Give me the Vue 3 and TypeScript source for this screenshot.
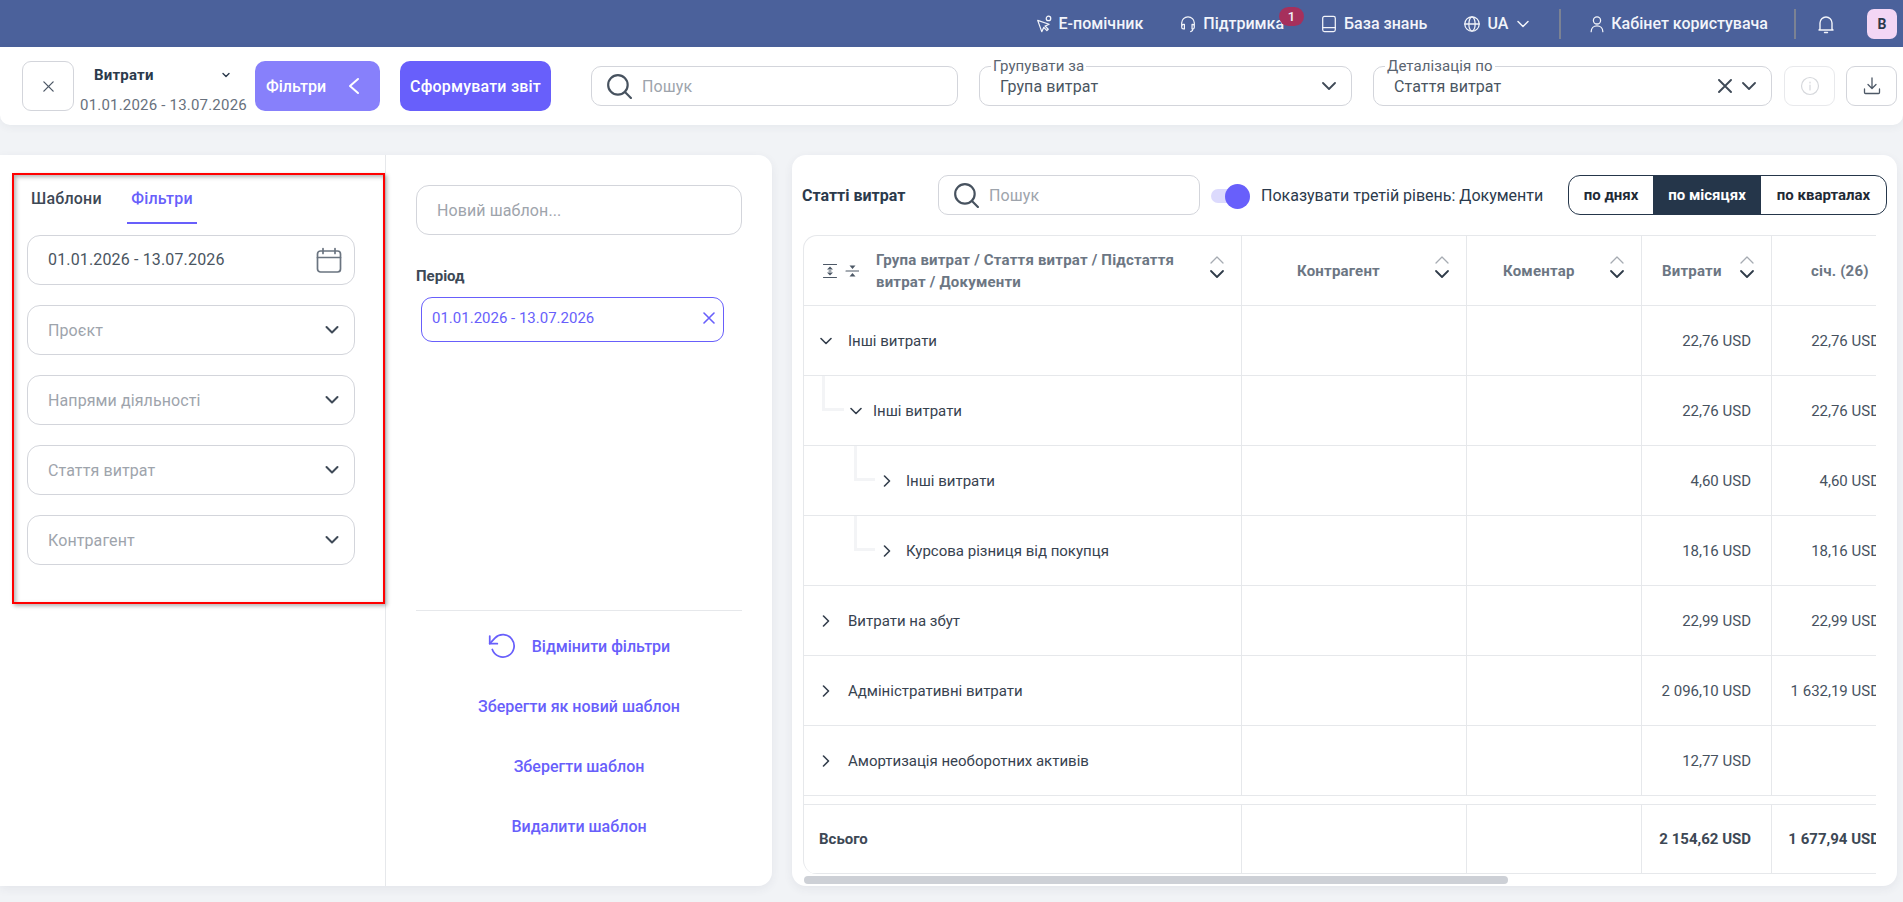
<script setup lang="ts">
interface Row {
  name: string
  level: number
  open: boolean
  total: string
  jan: string
}

const filters: string[] = ['Проєкт', 'Напрями діяльності', 'Стаття витрат', 'Контрагент']

const rows: Row[] = [
  { name: 'Інші витрати', level: 0, open: true, total: '22,76 USD', jan: '22,76 USD' },
  { name: 'Інші витрати', level: 1, open: true, total: '22,76 USD', jan: '22,76 USD' },
  { name: 'Інші витрати', level: 2, open: false, total: '4,60 USD', jan: '4,60 USD' },
  { name: 'Курсова різниця від покупця', level: 2, open: false, total: '18,16 USD', jan: '18,16 USD' },
  { name: 'Витрати на збут', level: 0, open: false, total: '22,99 USD', jan: '22,99 USD' },
  { name: 'Адміністративні витрати', level: 0, open: false, total: '2 096,10 USD', jan: '1 632,19 USD' },
  { name: 'Амортизація необоротних активів', level: 0, open: false, total: '12,77 USD', jan: '' },
]

const actions: string[] = ['Зберегти як новий шаблон', 'Зберегти шаблон', 'Видалити шаблон']
</script>

<template>
  <div class="page">
    <header class="topbar">
      <a class="top-link">
        <svg class="top-ico" viewBox="0 0 20 20"><path d="M3 6l4.500 12.500 2.300-4.800 3.400 3.600 1.500-1.500-3.500-3.500 4.500-2z" /><circle cx="15" cy="3.800" r="2.500" /></svg>
        Е-помічник
      </a>
      <a class="top-link support">
        <svg class="top-ico" viewBox="0 0 20 20"><path d="M3 12V9a7 7 0 0 1 14 0v3M3 12.500a2 2 0 0 1 2-2h1v5H5a2 2 0 0 1-2-2zM17 12.500a2 2 0 0 0-2-2h-.5v5h.5a2 2 0 0 0 2-2zM15.500 15.500c0 1.500-1 2.500-2.500 3" /></svg>
        Підтримка
        <span class="badge">1</span>
      </a>
      <a class="top-link">
        <svg class="top-ico" viewBox="0 0 20 20"><rect x="3" y="1.500" width="14" height="17" rx="2" /><path d="M3 14h14" /></svg>
        База знань
      </a>
      <a class="top-link lang">
        <svg class="top-ico" viewBox="0 0 20 20"><circle cx="10" cy="10" r="8" /><ellipse cx="10" cy="10" rx="3.500" ry="8" /><path d="M2 10h16" /></svg>
        UA
        <svg class="top-chev" viewBox="0 0 12 12"><path d="M1 3.500l5 5 5-5" /></svg>
      </a>
      <span class="top-sep" />
      <a class="top-link user">
        <svg class="top-ico" viewBox="0 0 20 20"><circle cx="10" cy="6" r="4" /><path d="M3.500 18.500c0-4 2.800-6.500 6.500-6.500s6.500 2.500 6.500 6.500" /></svg>
        Кабінет користувача
      </a>
      <span class="top-sep sep-2" />
      <svg class="bell" viewBox="0 0 20 20"><path d="M4 15V9a6 6 0 0 1 12 0v6l1 1H3zM8.500 18.500h3" /></svg>
      <span class="avatar">В</span>
    </header>

    <section class="toolbar">
      <button class="square-btn close-btn">
        <svg viewBox="0 0 14 14"><path d="M2 2l10 10M12 2L2 12" /></svg>
      </button>
      <div class="report">
        <div class="report-row">
          <b>Витрати</b>
          <svg viewBox="0 0 12 12"><path d="M3 4.500l3 3 3-3" /></svg>
        </div>
        <span class="report-date">01.01.2026 - 13.07.2026</span>
      </div>
      <button class="fill-btn filters-btn">
        Фільтри
        <svg viewBox="0 0 12 20"><path d="M10 3L2 10l8 7" /></svg>
      </button>
      <button class="fill-btn build-btn">Сформувати звіт</button>
      <div class="field search-main">
        <svg class="search-ico" viewBox="0 0 24 24"><circle cx="11" cy="11" r="9" /><path d="M17.500 17.500L23 23" /></svg>
        <span class="ph">Пошук</span>
      </div>
      <div class="field group-by">
        <span class="legend">Групувати за</span>
        <span class="value">Група витрат</span>
        <svg class="chev" viewBox="0 0 14 14"><path d="M1 4l6 6 6-6" /></svg>
      </div>
      <div class="field detail-by">
        <span class="legend">Деталізація по</span>
        <span class="value">Стаття витрат</span>
        <svg class="clear" viewBox="0 0 14 14"><path d="M1 1l12 12M13 1L1 13" /></svg>
        <svg class="chev" viewBox="0 0 14 14"><path d="M1 4l6 6 6-6" /></svg>
      </div>
      <button class="square-btn info-btn">
        <svg viewBox="0 0 20 20"><circle cx="10" cy="10" r="8.500" /><path d="M10 9v5M10 6v1" /></svg>
      </button>
      <button class="square-btn save-btn">
        <svg viewBox="0 0 20 20"><path d="M10 2v10M6 8.500l4 4 4-4M2.500 13v3.500a1 1 0 0 0 1 1h13a1 1 0 0 0 1-1V13" /></svg>
      </button>
    </section>

    <main class="content">
      <section class="card filter-card">
        <div class="filter-col">
          <div class="marked">
            <div class="tabs">
              <span class="tab">Шаблони</span>
              <span class="tab active">Фільтри</span>
            </div>
            <div class="filter-list">
              <div class="select">
                <span class="select-date">01.01.2026 - 13.07.2026</span>
                <svg class="cal" viewBox="0 0 26 26"><rect x="1.500" y="3.500" width="23" height="21" rx="3" /><path d="M1.500 10h23M7 1v5M19 1v5" /></svg>
              </div>
              <div v-for="f in filters" :key="f" class="select">
                <span class="ph">{{ f }}</span>
                <svg class="sel-chev" viewBox="0 0 14 14"><path d="M1.500 4l5.500 5.500L12.500 4" /></svg>
              </div>
            </div>
          </div>
        </div>
        <div class="template-col">
          <div class="select name-input"><span class="ph">Новий шаблон...</span></div>
          <div class="period-label">Період</div>
          <div class="chip">
            <span>01.01.2026 - 13.07.2026</span>
            <svg viewBox="0 0 12 12"><path d="M1 1l10 10M11 1L1 11" /></svg>
          </div>
          <div class="template-actions">
            <a class="action reset">
              <svg viewBox="0 0 24 24"><path d="M1.500 3.500v6.500h6.500" /><path d="M3.700 15a9.600 9.600 0 1 0 2.200-9.800L1.500 10" /></svg>
              Відмінити фільтри
            </a>
            <a v-for="a in actions" :key="a" class="action">{{ a }}</a>
          </div>
        </div>
      </section>

      <section class="card table-card">
        <div class="table-head">
          <b class="table-title">Статті витрат</b>
          <div class="field search-table">
            <svg class="search-ico" viewBox="0 0 24 24"><circle cx="11" cy="11" r="9" /><path d="M17.500 17.500L23 23" /></svg>
            <span class="ph">Пошук</span>
          </div>
          <div class="toggle"><span class="knob" /></div>
          <span class="toggle-label">Показувати третій рівень: Документи</span>
          <div class="period-switch">
            <span>по днях</span>
            <span class="on">по місяцях</span>
            <span>по кварталах</span>
          </div>
        </div>

        <div class="grid-wrap">
          <div class="grid-row grid-header">
            <div class="cell first head-first">
              <svg class="expand-all" viewBox="0 0 36 14">
                <path d="M0.500 0.500h13M0.500 13.500h13M6 7h2M23 7h13" />
                <path class="solid" d="M7 2.500l-3 3h6zM7 11.500l-3-3h6zM29.500 5l-3-3.500h6zM29.500 9l-3 3.500h6z" />
              </svg>
              <span class="head-text">Група витрат / Стаття витрат / Підстаття витрат / Документи</span>
              <svg class="sort" viewBox="0 0 16 26"><path class="up" d="M2 9l6-6 6 6" /><path d="M2 17l6 6 6-6" /></svg>
            </div>
            <div class="cell c2 head-center">
              <span class="head-text">Контрагент</span>
              <svg class="sort" viewBox="0 0 16 26"><path class="up" d="M2 9l6-6 6 6" /><path d="M2 17l6 6 6-6" /></svg>
            </div>
            <div class="cell c3 head-center">
              <span class="head-text">Коментар</span>
              <svg class="sort" viewBox="0 0 16 26"><path class="up" d="M2 9l6-6 6 6" /><path d="M2 17l6 6 6-6" /></svg>
            </div>
            <div class="cell c4 head-center">
              <span class="head-text">Витрати</span>
              <svg class="sort" viewBox="0 0 16 26"><path class="up" d="M2 9l6-6 6 6" /><path d="M2 17l6 6 6-6" /></svg>
            </div>
            <div class="cell c5 head-last"><span class="head-text">січ. (26)</span></div>
          </div>

          <div v-for="(r, i) in rows" :key="i" class="grid-row">
            <div class="cell first" :class="`lvl-${r.level}`">
              <span v-if="r.level > 0" class="tree" />
              <svg class="row-chev" viewBox="0 0 12 12">
                <path v-if="r.open" d="M1 3.500L6 8.500l5-5" />
                <path v-else d="M3.500 1L8.500 6l-5 5" />
              </svg>
              <span>{{ r.name }}</span>
            </div>
            <div class="cell c2" />
            <div class="cell c3" />
            <div class="cell c4 num">{{ r.total }}</div>
            <div class="cell c5 num">{{ r.jan }}</div>
          </div>

          <div class="grid-row grid-total">
            <div class="cell first">Всього</div>
            <div class="cell c2" />
            <div class="cell c3" />
            <div class="cell c4 num">2 154,62 USD</div>
            <div class="cell c5 num">1 677,94 USD</div>
          </div>
        </div>
        <div class="scrollbar"><span class="thumb" /></div>
      </section>
    </main>
  </div>
</template>

<style>
html, body { margin: 0; background: #f1f3f6; }
</style>

<style scoped>
* { box-sizing: border-box; }
svg { fill: none; stroke: currentColor; stroke-linecap: round; stroke-linejoin: round; flex: none; }
.page { width: 1903px; height: 902px; overflow: hidden; font-family: Roboto, "Liberation Sans", sans-serif; background: #f1f3f6; color: #2b3a4c; }

.topbar { height: 47px; background: #4b619b; color: #f2f4fa; display: flex; align-items: center; padding: 0 6px 0 0; justify-content: flex-end; font-size: 16px; font-weight: 500; }
.top-link { display: flex; align-items: center; gap: 6px; margin-left: 36px; position: relative; white-space: nowrap; }
.top-ico { width: 18px; height: 18px; stroke-width: 1.4; }
.top-chev { width: 12px; height: 12px; stroke-width: 1.5; margin-left: 3px; }
.badge { position: absolute; right: -20px; top: -7px; width: 25px; height: 19px; border-radius: 10px; background: #a6305c; font-size: 13px; display: flex; align-items: center; justify-content: center; }
.top-sep { width: 2px; height: 30px; background: #7b8293; margin-left: 30px; }
.user { margin-left: 27px; gap: 5px; }
.sep-2 { margin-left: 26px; }
.bell { width: 20px; height: 20px; stroke-width: 1.4; margin-left: 20px; }
.avatar { width: 30px; height: 30px; border-radius: 7px; background: #f3d6f5; color: #2b3a4c; font-weight: 700; font-size: 14px; display: flex; align-items: center; justify-content: center; margin-left: 31px; }

.toolbar { height: 78px; background: #fff; border-radius: 0 0 10px 10px; display: flex; align-items: center; padding-left: 22px; box-shadow: 0 2px 8px rgba(50,60,80,.06); }
.square-btn { width: 51px; height: 40px; border: 1px solid #d3d5db; border-radius: 9px; background: #fff; padding: 0; display: flex; align-items: center; justify-content: center; color: #4d5866; }
.close-btn { width: 52px; height: 50px; }
.close-btn svg { width: 13px; height: 13px; stroke-width: 1.4; }
.report { width: 172px; margin-left: 5px; position: relative; height: 50px; }
.report-row { display: flex; justify-content: space-between; align-items: center; padding: 5px 19px 0 15px; font-size: 15px; letter-spacing: .2px; color: #2b3a4c; }
.report-row svg { width: 12px; height: 12px; stroke-width: 1.4; }
.report-date { display: block; font-size: 15px; letter-spacing: .2px; color: #68717d; margin-top: 12px; margin-left: 1px; white-space: nowrap; }
.fill-btn { height: 50px; border: 0; border-radius: 10px; color: #fff; font: 500 16px Roboto, sans-serif; display: flex; align-items: center; justify-content: center; }
.filters-btn { width: 125px; background: #8780fb; margin-left: 4px; justify-content: space-between; padding: 0 20px 0 11px; }
.filters-btn svg { width: 12px; height: 20px; stroke-width: 2; }
.build-btn { width: 151px; background: #685ffb; margin-left: 20px; letter-spacing: .2px; padding: 0; }
.field { position: relative; height: 40px; border: 1px solid #d3d5db; border-radius: 10px; background: #fff; display: flex; align-items: center; }
.search-main { width: 367px; margin-left: 40px; padding-left: 14px; }
.search-ico { width: 26px; height: 26px; color: #47525f; stroke-width: 2; margin-right: 10px; }
.ph { color: #9ea4ac; font-size: 16px; letter-spacing: .1px; }
.group-by { width: 373px; margin-left: 21px; padding: 0 15px 0 20px; }
.detail-by { width: 399px; margin-left: 21px; padding: 0 15px 0 20px; }
.legend { position: absolute; left: 11px; top: -10px; padding: 0 2px; background: #fff; font-size: 15px; line-height: 18px; letter-spacing: .1px; color: #5a6470; }
.value { font-size: 16px; letter-spacing: .1px; color: #4a5561; flex: 1; }
.chev { width: 14px; height: 14px; stroke-width: 1.8; color: #3f4a57; }
.clear { width: 14px; height: 14px; stroke-width: 1.9; color: #3f4a57; margin-right: 10px; }
.info-btn { margin-left: 12px; border-color: #e8e9ec; color: #d6d8dc; }
.info-btn svg { width: 20px; height: 20px; stroke-width: 1.2; }
.save-btn { margin-left: 11px; }
.save-btn svg { width: 20px; height: 20px; stroke-width: 1.3; }

.content { display: flex; gap: 20px; padding: 30px 6px 0 0; }
.card { background: #fff; height: 731px; border-radius: 0 14px 14px 0; box-shadow: 0 3px 10px rgba(50,60,80,.07); }
.filter-card { width: 772px; display: flex; }
.filter-col { width: 386px; border-right: 1px solid #e6e8eb; padding: 18px 0 0 12px; }
.marked { width: 373px; height: 431px; border: 2px solid #f00; padding: 1px 16px 0 13px; box-shadow: 2px 2px 4px rgba(0,0,0,.3), inset 2px 2px 4px rgba(0,0,0,.3); }
.tabs { display: flex; height: 48px; font-size: 16px; font-weight: 500; letter-spacing: .2px; padding-left: 4px; margin-bottom: 11px; }
.tab { line-height: 46px; color: #3d4855; width: 70px; }
.tab.active { color: #685ffb; width: 70px; margin-left: 26px; text-align: center; border-bottom: 2px solid #685ffb; }
.filter-list { display: flex; flex-direction: column; gap: 20px; }
.select { width: 328px; height: 50px; border: 1px solid #d3d5db; border-radius: 13px; display: flex; align-items: center; justify-content: space-between; padding: 0 15px 0 20px; }
.select-date { font-size: 16px; letter-spacing: .15px; color: #4a5561; margin-top: -2px; }
.cal { width: 26px; height: 27px; stroke-width: 1.7; color: #6a7480; margin-right: -3px; }
.sel-chev { width: 14px; height: 14px; stroke-width: 2; color: #3f4a57; }
.template-col { flex: 1; padding: 30px 30px 0 30px; display: flex; flex-direction: column; }
.name-input { width: 326px; }
.period-label { font-size: 15px; font-weight: 700; margin-top: 32px; color: #3d4855; line-height: 18px; }
.chip { width: 303px; height: 45px; margin: 12px 0 0 5px; border: 1px solid #685ffb; border-radius: 11px; display: flex; align-items: center; justify-content: space-between; padding: 0 8px 4px 10px; color: #685ffb; font-size: 15px; }
.chip svg { width: 12px; height: 12px; stroke-width: 1.6; }
.template-actions { margin-top: 268px; border-top: 1px solid #e6e8eb; width: 326px; display: flex; flex-direction: column; align-items: center; padding-top: 10px; }
.action { height: 60px; display: flex; align-items: center; gap: 16px; color: #685ffb; font-size: 16px; font-weight: 500; }
.reset { height: 50px; margin-bottom: 5px; }
.reset svg { width: 28px; height: 28px; stroke-width: 1.5; }

.table-card { width: 1105px; border-radius: 14px; padding: 20px 10px 0 10px; position: relative; }
.table-head { display: flex; align-items: center; height: 40px; }
.table-title { width: 136px; font-size: 16px; color: #2b3a4c; }
.search-table { width: 262px; padding-left: 14px; }
.toggle { width: 40px; height: 22px; margin-left: 10px; position: relative; }
.toggle::before { content: ""; position: absolute; left: 1px; top: 5px; width: 30px; height: 14px; border-radius: 8px; background: #dcdafd; }
.knob { position: absolute; right: 0; top: 0; width: 25px; height: 25px; border-radius: 50%; background: #685ffb; }
.toggle-label { font-size: 16px; margin-left: 11px; white-space: nowrap; color: #2b3a4c; }
.period-switch { display: flex; margin-left: auto; width: 319px; height: 40px; border: 1px solid #25364a; border-radius: 12px; overflow: hidden; font-size: 15px; font-weight: 700; color: #1f2a36; }
.period-switch span { display: flex; align-items: center; justify-content: center; width: 84px; }
.period-switch span:nth-child(2) { width: 108px; }
.period-switch span:nth-child(3) { flex: 1; }
.period-switch .on { background: #25364a; color: #fff; }

.grid-wrap { width: 1073px; margin-top: 20px; margin-left: 1px; overflow: hidden; border-radius: 14px 0 0 14px; border-left: 1px solid #e6e8eb; border-top: 1px solid #e6e8eb; }
.grid-row { display: flex; height: 70px; border-bottom: 1px solid #e6e8eb; font-size: 15px; color: #37424f; }
.cell { height: 100%; border-right: 1px solid #e6e8eb; display: flex; align-items: center; flex: none; position: relative; white-space: nowrap; }
.first { width: 438px; padding-left: 16px; }
.c2 { width: 225px; }
.c3 { width: 175px; }
.c4 { width: 130px; }
.c5 { width: 130px; border-right: 0; }
.num { justify-content: flex-end; padding-right: 20px; color: #47525f; }
.c5.num { padding-right: 22px; }
.grid-header { font-weight: 700; color: #6c7683; letter-spacing: .2px; }
.head-first { padding-left: 19px; }
.head-text { line-height: 22px; white-space: normal; }
.head-first .head-text { width: 316px; }
.expand-all { width: 36px; height: 14px; stroke-width: 1.1; color: #4d5866; margin-right: 17px; }
.expand-all .solid { fill: currentColor; stroke: none; }
.sort { width: 16px; height: 26px; stroke-width: 1.8; color: #2f3b49; position: absolute; right: 16px; top: 18px; }
.sort .up { stroke: #a6abb2; stroke-width: 1.3; }
.head-center { padding-left: 55px; }
.c3.head-center { padding-left: 36px; }
.c4.head-center { padding-left: 20px; }
.head-last { padding-left: 39px; }
.row-chev { width: 12px; height: 12px; stroke-width: 1.6; color: #333e4c; margin-right: 16px; }
.lvl-1 { padding-left: 46px; }
.lvl-1 .row-chev { margin-right: 11px; }
.lvl-2 { padding-left: 77px; }
.lvl-2 .row-chev { margin-right: 13px; }
.tree { position: absolute; top: 0; height: 50%; border-left: 3px solid #f3f4f6; border-bottom: 3px solid #f3f4f6; }
.lvl-1 .tree { left: 18px; width: 22px; }
.lvl-2 .tree { left: 50px; width: 21px; }
.grid-total { margin-top: 8px; border-top: 1px solid #e6e8eb; font-weight: 700; }
.grid-total .first { padding-left: 15px; color: #3d4855; }
.grid-total .num { color: #3d4855; }
.scrollbar { height: 9px; margin-top: 2px; width: 1080px; position: relative; }
.thumb { position: absolute; left: 2px; top: 0; height: 8px; width: 704px; border-radius: 4px; background: #cdd0d6; }
</style>
